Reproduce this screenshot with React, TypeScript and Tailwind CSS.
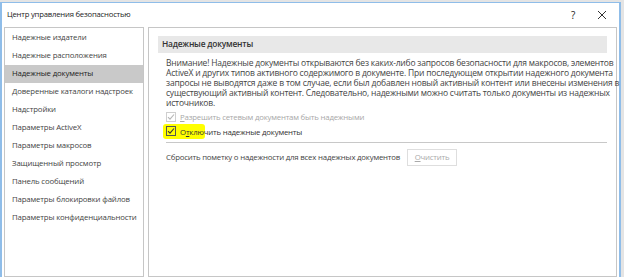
import React from "react";

const items = [
  "Надежные издатели",
  "Надежные расположения",
  "Надежные документы",
  "Доверенные каталоги надстроек",
  "Надстройки",
  "Параметры ActiveX",
  "Параметры макросов",
  "Защищенный просмотр",
  "Панель сообщений",
  "Параметры блокировки файлов",
  "Параметры конфиденциальности",
];

const lines = [
  "Внимание! Надежные документы открываются без каких-либо запросов безопасности для макросов, элементов",
  "ActiveX и других типов активного содержимого в документе. При последующем открытии надежного документа",
  "запросы не выводятся даже в том случае, если был добавлен новый активный контент или внесены изменения в",
  "существующий активный контент. Следовательно, надежными можно считать только документы из надежных",
  "источников.",
];

function Check({ disabled }: { disabled?: boolean }) {
  const c = disabled ? "#b5b5b5" : "#333333";
  return (
    <span
      className={`inline-flex w-[10px] h-[10px] border items-center justify-center ${
        disabled ? "border-[#cfcfcf]" : "border-[#555]"
      }`}
    >
      <svg width="8" height="8" viewBox="0 0 8 8">
        <path d="M1 4.2 L3 6.2 L7 1.5" fill="none" stroke={c} strokeWidth="1.1" />
      </svg>
    </span>
  );
}

export default function App() {
  return (
    <div
      className="w-[624px] h-[277px] bg-[#e4e4e4] overflow-hidden pt-[2px] text-[#333]"
      style={{ fontFamily: '"Segoe UI", "Open Sans", "Liberation Sans", sans-serif' }}
    >
      <div className="w-[621px] h-[275px] bg-white border-t border-l-2 border-r-2 border-[#8fbde9] flex flex-col">
        <div className="h-[24px] flex items-center pl-[5px] pr-[12px] text-[7.7px] tracking-[-0.2px] text-[#222]">
          <span className="flex-1">Центр управления безопасностью</span>
          <span className="text-[10px] mr-[22px]">?</span>
          <svg width="10" height="10" viewBox="0 0 10 10">
            <path d="M1 1 L9 9 M9 1 L1 9" stroke="#333" strokeWidth="1" />
          </svg>
        </div>
        <div className="flex-1 flex gap-[4px] pl-[2px] pr-[2px]">
          <div className="w-[141px] border border-[#c6c6c6] pt-[1px] text-[7.8px] tracking-[-0.15px]">
            {items.map((t, i) => (
              <div
                key={t}
                className={`h-[18px] flex items-center pl-[7px] whitespace-nowrap ${
                  i === 2 ? "bg-[#c9c9c9] text-[#222]" : "text-[#444]"
                }`}
              >
                {t}
              </div>
            ))}
          </div>
          <div className="w-[469px] border border-[#c6c6c6] px-[9px] pt-[8px] text-[8.5px] tracking-[-0.2px]">
            <div className="h-[17px] bg-[#e8e8e8] flex items-center pl-[4px] text-[8.4px] font-semibold text-[#333]">
              Надежные документы
            </div>
            <div className="pl-[8px] pt-[5px] leading-[10px] text-[#444]">
              {lines.map((l) => (
                <div key={l} className="whitespace-nowrap">
                  {l}
                </div>
              ))}
              <div className="flex items-center gap-[4px] h-[15px] mt-[1px] text-[7.8px] text-[#a8a8a8]">
                <Check disabled />
                <span>
                  <span className="underline">Р</span>азрешить сетевым документам быть надежными
                </span>
              </div>
              <div className="flex items-center gap-[4px] h-[15px] relative text-[7.8px]">
                <span className="absolute left-[-3px] top-[0px] w-[42px] h-[15px] bg-[#ffff00] rounded-[3px] blur-[0.5px]" />
                <span className="relative">
                  <Check />
                </span>
                <span className="relative text-[#333]">
                  О<span className="underline">т</span>ключить надежные документы
                </span>
              </div>
              <div className="border-t border-[#c8c8c8] mt-[3px]" />
              <div className="flex items-center h-[24px] mt-[2px] text-[7.8px]">
                <span className="text-[#444]">Сбросить пометку о надежности для всех надежных документов</span>
                <span className="ml-[7px] w-[50px] h-[17px] border border-[#dedede] flex items-center justify-center text-[#aaa]">
                  <span>
                    <span className="underline">О</span>чистить
                  </span>
                </span>
              </div>
            </div>
          </div>
        </div>
      </div>
    </div>
  );
}
